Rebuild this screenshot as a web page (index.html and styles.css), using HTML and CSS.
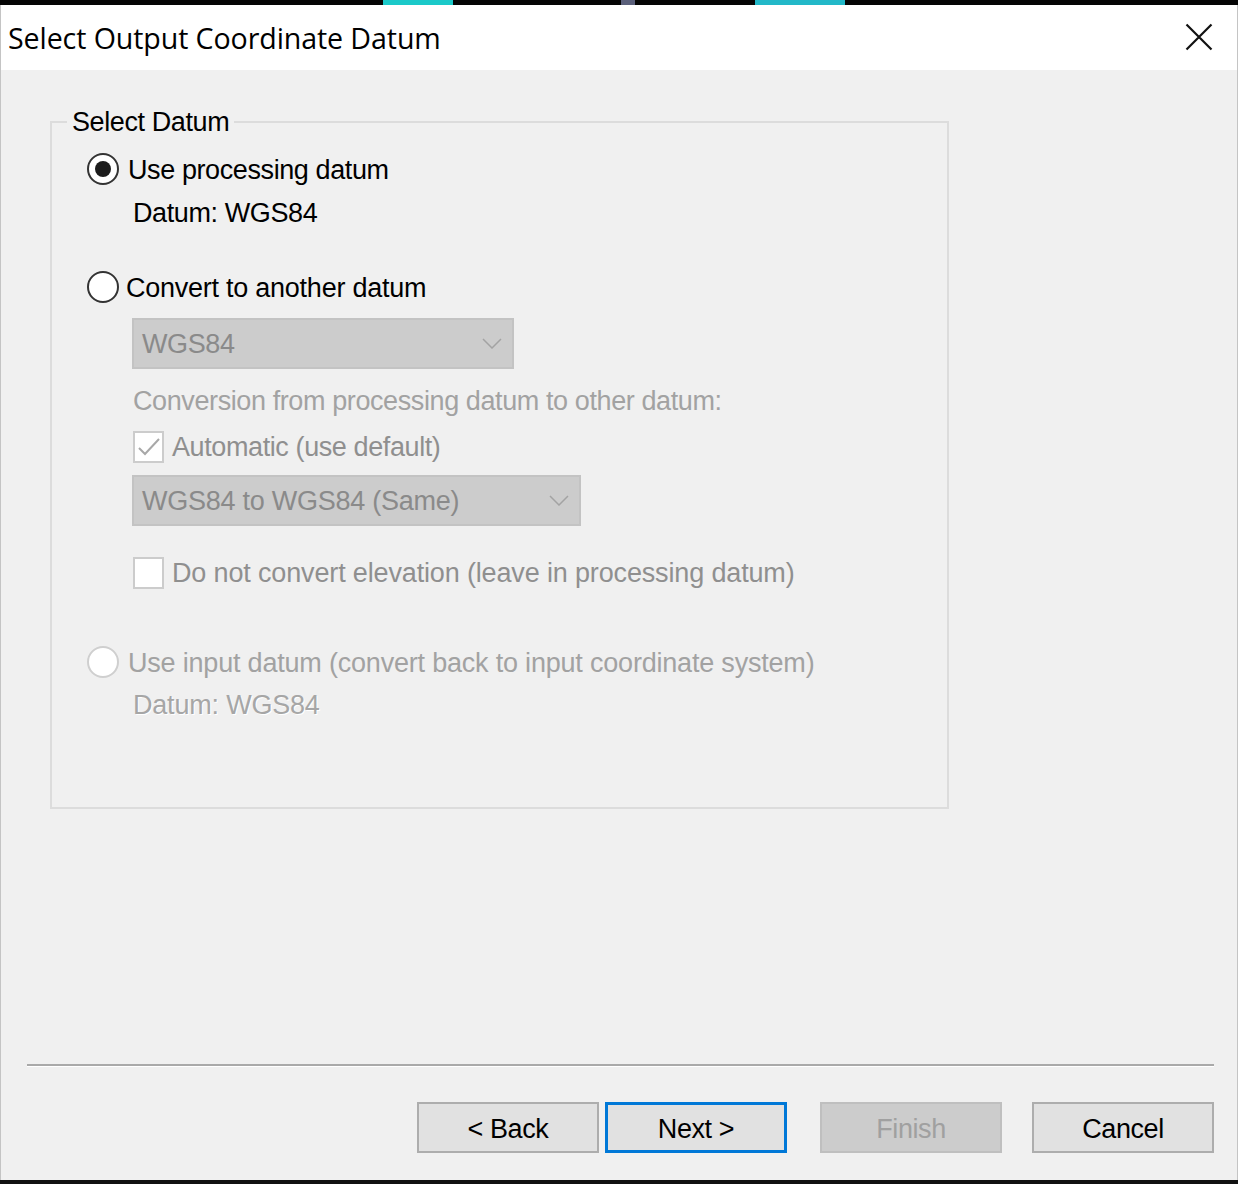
FILE: index.html
```html
<!DOCTYPE html>
<html>
<head>
<meta charset="utf-8">
<title>Select Output Coordinate Datum</title>
<link rel="stylesheet" href="styles.css">
</head>
<body>
<div class="window">
  <div class="strip strip-top">
    <span class="bit bit-a"></span>
    <span class="bit bit-b"></span>
    <span class="bit bit-c"></span>
  </div>
  <header class="titlebar">
    <span class="title">Select Output Coordinate Datum</span>
    <svg class="close" width="28" height="28" viewBox="0 0 28 28"><path d="M1.5 1.5 L26.5 26.5 M26.5 1.5 L1.5 26.5" stroke="#111" stroke-width="2.2" fill="none"/></svg>
  </header>
  <main class="content">
    <fieldset class="group">
      <legend class="legend">Select Datum</legend>
      <div class="row radio-row r1"><span class="radio checked"></span><span class="lbl">Use processing datum</span></div>
      <div class="row sub r2">Datum: WGS84</div>
      <div class="row radio-row r3"><span class="radio"></span><span class="lbl lbl-tight">Convert to another datum</span></div>
      <div class="combo combo-1"><span class="combo-text">WGS84</span><svg class="chev" width="20" height="11" viewBox="0 0 20 11"><path d="M1 1 L10 10 L19 1" stroke="#a3a3a3" stroke-width="1.5" fill="none"/></svg></div>
      <div class="row sub disabled light r5">Conversion from processing datum to other datum:</div>
      <div class="row check-row disabled r6"><span class="check"><svg width="27" height="28" viewBox="0 0 27 28"><path d="M4 15 L10 21 L24 6" stroke="#a8a8a8" stroke-width="2" fill="none"/></svg></span><span class="lbl">Automatic (use default)</span></div>
      <div class="combo combo-2"><span class="combo-text">WGS84 to WGS84 (Same)</span><svg class="chev" width="20" height="11" viewBox="0 0 20 11"><path d="M1 1 L10 10 L19 1" stroke="#a3a3a3" stroke-width="1.5" fill="none"/></svg></div>
      <div class="row check-row disabled wide r8"><span class="check"></span><span class="lbl">Do not convert elevation (leave in processing datum)</span></div>
      <div class="row radio-row disabled light wide2 r9"><span class="radio off"></span><span class="lbl">Use input datum (convert back to input coordinate system)</span></div>
      <div class="row sub emboss r10">Datum: WGS84</div>
    </fieldset>
  </main>
  <footer class="footer">
    <div class="sep"></div>
    <div class="buttons">
      <button class="btn btn-back">&lt; Back</button>
      <button class="btn btn-next">Next &gt;</button>
      <button class="btn btn-finish" disabled>Finish</button>
      <button class="btn btn-cancel">Cancel</button>
    </div>
  </footer>
  <div class="strip strip-bottom"></div>
</div>
</body>
</html>
```
FILE: styles.css
```css
html, body {
  margin: 0;
  padding: 0;
  background: #000;
}
.window {
  width: 1238px;
  height: 1184px;
  display: flex;
  flex-direction: column;
  background: #f0f0f0;
  font-family: "Liberation Sans", Arial, sans-serif;
  color: #000;
  overflow: hidden;
}
.strip {
  background: #050505;
  flex: none;
  display: flex;
}
.strip-top {
  height: 5px;
}
.bit { height: 5px; display: block; }
.bit-a { margin-left: 383px; width: 70px; background: #1bc9c9; }
.bit-b { margin-left: 168px; width: 14px; background: #5a5f7a; }
.bit-c { margin-left: 120px; width: 90px; background: #22b8c8; }
.strip-bottom {
  height: 4px;
  background: #111;
}
.titlebar {
  flex: none;
  height: 65px;
  background: #fff;
  border-left: 1px solid #c4c4c4;
  border-right: 1px solid #c4c4c4;
  display: flex;
  align-items: center;
  justify-content: space-between;
  padding: 0 24px 0 7px;
}
.title {
  font-family: "Open Sans", "Noto Sans", sans-serif;
  font-size: 28.6px;
  letter-spacing: -0.1px;
  color: #000;
  padding-bottom: 1px;
}
.close {
  display: block;
  margin-top: -2px;
  width: 28px;
  height: 28px;
}
.content {
  flex: 1;
  border-left: 1px solid #c4c4c4;
  border-right: 1px solid #c4c4c4;
  padding-top: 37px;
}
.group {
  margin: 0 0 0 49px;
  width: 895px;
  padding: 0 0 88px 0;
  border: 2px solid #dcdcdc;
  font-size: 27px;
  letter-spacing: -0.4px;
}
.legend {
  margin-left: 15px;
  padding: 0 5px;
  line-height: 30px;
  height: 30px;
  font-size: 27px;
}
.row {
  display: flex;
  align-items: center;
  white-space: nowrap;
}
.lbl { padding-top: 2px; }
.radio-row {
  height: 34px;
  padding-left: 35px;
}
.radio {
  flex: none;
  width: 28px;
  height: 28px;
  border: 2px solid #333;
  border-radius: 50%;
  background: #fff;
  box-sizing: content-box;
  display: flex;
  align-items: center;
  justify-content: center;
  margin-right: 9px;
}
.radio.checked::after {
  content: "";
  width: 16px;
  height: 16px;
  border-radius: 50%;
  background: #1c1c1c;
}
.radio.off {
  border-color: #cfcfcf;
}
.lbl-tight { margin-left: -2px; letter-spacing: -0.25px; }
.sub {
  height: 30px;
  padding-left: 81px;
  padding-top: 2px;
  box-sizing: border-box;
}
.check-row {
  height: 33px;
  padding-left: 81px;
}
.check {
  flex: none;
  width: 27px;
  height: 28px;
  border: 2px solid #cccccc;
  background: #fff;
  margin-right: 8px;
}
.check svg { display: block; }
.disabled { color: #8f8f8f; }
.light { color: #a2a2a2; }
.wide { letter-spacing: -0.15px; }
.wide2 { letter-spacing: -0.2px; }
.emboss {
  color: #a6a6a6;
  text-shadow: 1px 1px 0 #fff;
  letter-spacing: -0.2px;
}
.combo {
  margin-left: 80px;
  height: 47px;
  background: #cccccc;
  border: 2px solid #c3c3c3;
  display: flex;
  align-items: center;
  justify-content: space-between;
  padding: 2px 10px 0 8px;
  color: #8a8a8a;
  white-space: nowrap;
  box-sizing: content-box;
}
.combo-1 { width: 360px; }
.combo-2 { width: 427px; }
.combo-2 .combo-text { letter-spacing: -0.25px; }
.chev { display: block; flex: none; margin-top: -2px; }

.r1 { margin-top: 15px; }
.r2 { margin-top: 11px; }
.r3 { margin-top: 43px; }
.combo-1 { margin-top: 14px; height: 45px; }
.r5 { margin-top: 16px; }
.r6 { margin-top: 15px; }
.combo-2 { margin-top: 12px; height: 45px; }
.r8 { margin-top: 30px; }
.r9 { margin-top: 56px; }
.r10 { margin-top: 10px; }

.footer {
  flex: none;
  height: 116px;
  border-left: 1px solid #c4c4c4;
  border-right: 1px solid #c4c4c4;
}
.sep {
  margin: 0 23px 0 26px;
  height: 0;
  border-top: 2px solid #a9a9a9;
  border-bottom: 1px solid #fff;
}
.buttons {
  display: flex;
  justify-content: flex-end;
  padding-right: 23px;
  margin-top: 35px;
}
.btn {
  font-family: "Liberation Sans", Arial, sans-serif;
  font-size: 27px;
  letter-spacing: -0.4px;
  height: 51px;
  width: 182px;
  background: #e1e1e1;
  border: 2px solid #adadad;
  color: #000;
  padding: 3px 0 0 0;
  margin: 0;
}
.btn-next {
  margin-left: 6px;
  border: 3px solid #0078d7;
}
.btn-finish {
  margin-left: 33px;
  background: #cccccc;
  border-color: #bfbfbf;
  color: #a0a0a0;
}
.btn-cancel {
  margin-left: 30px;
}
```
